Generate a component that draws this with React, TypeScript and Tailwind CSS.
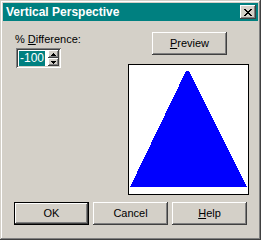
const raised =
  "shadow-[inset_-1px_-1px_#404040,inset_1px_1px_#ffffff,inset_-2px_-2px_#808080,inset_2px_2px_#d4d0c8]";

function Btn({ children, def = false, className = "" }: { children: React.ReactNode; def?: boolean; className?: string }) {
  if (def) {
    return (
      <div className={`w-[75px] h-[23px] border border-black bg-[#d4d0c8] ${className}`}>
        <div className="w-full h-full flex items-center justify-center shadow-[inset_-1px_-1px_#404040,inset_1px_1px_#ffffff,inset_-2px_-2px_#808080]">
          {children}
        </div>
      </div>
    );
  }
  return (
    <div className={`w-[75px] h-[23px] flex items-center justify-center bg-[#d4d0c8] ${raised} ${className}`}>
      {children}
    </div>
  );
}

function SpinArrow({ up }: { up: boolean }) {
  return (
    <div className={`w-[11px] h-[8px] flex items-center justify-center bg-[#d4d0c8] ${raised}`}>
      <svg width="5" height="3" viewBox="0 0 5 3" shapeRendering="crispEdges">
        {up ? <polygon points="2.5,0 5,3 0,3" fill="#000" /> : <polygon points="0,0 5,0 2.5,3" fill="#000" />}
      </svg>
    </div>
  );
}

export default function App() {
  return (
    <div
      className="w-[261px] h-[240px] bg-[#d4d0c8] p-[3px] flex flex-col text-[11px] text-black shadow-[inset_-1px_-1px_#404040,inset_1px_1px_#d4d0c8,inset_-2px_-2px_#808080,inset_2px_2px_#ffffff]"
      style={{ fontFamily: '"Liberation Sans", Arial, sans-serif' }}
    >
      {/* title bar */}
      <div className="h-[18px] bg-[#008080] flex items-center justify-between pl-[3px] pr-[2px]">
        <span className="text-white font-bold text-[12px] leading-none">Vertical Perspective</span>
        <div className={`w-[16px] h-[14px] flex items-center justify-center bg-[#d4d0c8] ${raised}`}>
          <svg width="8" height="7" viewBox="0 0 8 7" shapeRendering="crispEdges">
            <path d="M0 0h2v1h-2zM6 0h2v1h-2zM1 1h2v1h-2zM5 1h2v1h-2zM2 2h4v1h-4zM3 3h2v1h-2zM2 4h4v1h-4zM1 5h2v1h-2zM5 5h2v1h-2zM0 6h2v1h-2zM6 6h2v1h-2z" fill="#000" />
          </svg>
        </div>
      </div>

      {/* body */}
      <div className="flex pt-[11px]">
        <div className="pl-[12px] w-[125px] flex flex-col">
          <span className="mt-[1px] leading-[13px]">
            % <span className="underline">D</span>ifference:
          </span>
          <div className="mt-[2px] ml-[1px] w-[45px] h-[20px] bg-white flex p-[2px] shadow-[inset_1px_1px_#808080,inset_-1px_-1px_#ffffff,inset_2px_2px_#404040,inset_-2px_-2px_#d4d0c8]">
            <div className="flex-1 flex items-center pl-[1px]">
              <span className="bg-[#008080] text-white text-[12px] leading-[15px] px-[1px]">-100</span>
            </div>
            <div className="flex flex-col">
              <SpinArrow up />
              <SpinArrow up={false} />
            </div>
          </div>
        </div>
        <div className="flex flex-col">
          <Btn className="ml-[24px]">
            <span>
              <span className="underline">P</span>review
            </span>
          </Btn>
          <div className="mt-[9px] w-[121px] h-[131px] border border-black bg-white">
            <svg width="119" height="129" viewBox="0 0 119 129" shapeRendering="crispEdges">
              <polygon points="57,6 60,6 118,122 1,122" fill="#0000ff" />
            </svg>
          </div>
        </div>
      </div>

      {/* buttons */}
      <div className="flex gap-[4px] pl-[11px] mt-[7px]">
        <Btn def>OK</Btn>
        <Btn>Cancel</Btn>
        <Btn>
          <span>
            <span className="underline">H</span>elp
          </span>
        </Btn>
      </div>
    </div>
  );
}
